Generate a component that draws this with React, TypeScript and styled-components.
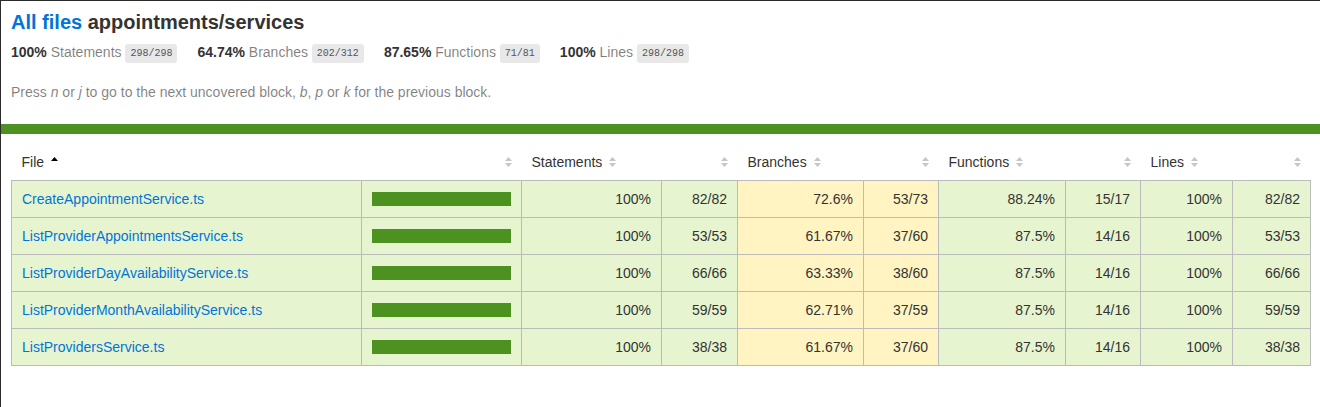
import React from 'react';
import styled, { createGlobalStyle } from 'styled-components';

type Level = 'high' | 'medium';

const GlobalStyle = createGlobalStyle`
  *, *::before, *::after { box-sizing: border-box; }
  html, body { margin: 0; padding: 0; }
  body {
    font-family: "Liberation Sans", Arial, Helvetica, sans-serif;
    font-size: 14px;
    color: #333;
    background: #fff;
    border-top: 1px solid #2b2b2b;
    border-left: 1px solid #2b2b2b;
    min-height: 100vh;
  }
`;

const Pad = styled.div`
  padding: 10px;
`;

const Title = styled.h1`
  font-size: 20px;
  font-weight: bold;
  margin: 0;
`;

const TitleLink = styled.a`
  color: #0074d9;
  text-decoration: none;
`;

const Summary = styled.div`
  display: flex;
`;

const Metric = styled.div`
  padding: 10px 20px 10px 0;
`;

const Strong = styled.span`
  font-weight: bold;
`;

const Quiet = styled.span`
  color: rgba(0, 0, 0, 0.5);
`;

const Fraction = styled.span`
  font-family: "Liberation Mono", "DejaVu Sans Mono", monospace;
  font-size: 10px;
  color: #555;
  background: #e8e8e8;
  padding: 4px 5px;
  border-radius: 3px;
  vertical-align: middle;
`;

const Hint = styled.p`
  color: rgba(0, 0, 0, 0.5);
  margin: 14px 0;
`;

const StatusLine = styled.div`
  height: 10px;
  background: rgb(77, 146, 33);
`;

const Table = styled.table`
  border-collapse: collapse;
  width: 100%;
  table-layout: fixed;
`;

const Body = styled.tbody`
  border: 1px solid #bbb;
`;

const Row = styled.tr`
  border-bottom: 1px solid #bbb;
`;

const Th = styled.th<{ $right?: boolean }>`
  padding: 10px;
  font-weight: normal;
  white-space: nowrap;
  text-align: ${(p) => (p.$right ? 'right' : 'left')};
`;

const Td = styled.td<{ $level: Level; $right?: boolean }>`
  padding: 10px;
  border-right: 1px solid #bbb;
  white-space: nowrap;
  text-align: ${(p) => (p.$right ? 'right' : 'left')};
  background: ${(p) => (p.$level === 'high' ? 'rgb(230, 245, 208)' : '#fff4c2')};
  &:last-child { border-right: none; }
`;

const FileLink = styled.a`
  color: #0074d9;
  text-decoration: none;
`;

const Chart = styled.div`
  line-height: 0;
  border: 1px solid rgb(77, 146, 33);
`;

const CoverFill = styled.div`
  display: inline-block;
  height: 12px;
  background: rgb(77, 146, 33);
`;

const SorterBox = styled.span`
  display: inline-block;
  width: 7px;
  height: 10px;
  margin-left: 0.5em;
  line-height: 0;
  svg { display: block; }
`;

const Sorter: React.FC<{ sorted?: boolean }> = ({ sorted }) => (
  <SorterBox>
    <svg width="7" height="10" viewBox="0 0 7 10">
      {sorted ? (
        <polygon points="0,4 3.5,0 7,4" fill="#000" />
      ) : (
        <>
          <polygon points="0,4 3.5,0 7,4" fill="#c6c6c6" />
          <polygon points="0,6 3.5,10 7,6" fill="#c6c6c6" />
        </>
      )}
    </svg>
  </SorterBox>
);

const metrics = [
  { pct: '100%', label: 'Statements', frac: '298/298' },
  { pct: '64.74%', label: 'Branches', frac: '202/312' },
  { pct: '87.65%', label: 'Functions', frac: '71/81' },
  { pct: '100%', label: 'Lines', frac: '298/298' },
];

type Pair = [string, string, Level];
interface FileRow {
  file: string;
  s: Pair;
  b: Pair;
  f: Pair;
  l: Pair;
}

const rows: FileRow[] = [
  { file: 'CreateAppointmentService.ts', s: ['100%', '82/82', 'high'], b: ['72.6%', '53/73', 'medium'], f: ['88.24%', '15/17', 'high'], l: ['100%', '82/82', 'high'] },
  { file: 'ListProviderAppointmentsService.ts', s: ['100%', '53/53', 'high'], b: ['61.67%', '37/60', 'medium'], f: ['87.5%', '14/16', 'high'], l: ['100%', '53/53', 'high'] },
  { file: 'ListProviderDayAvailabilityService.ts', s: ['100%', '66/66', 'high'], b: ['63.33%', '38/60', 'medium'], f: ['87.5%', '14/16', 'high'], l: ['100%', '66/66', 'high'] },
  { file: 'ListProviderMonthAvailabilityService.ts', s: ['100%', '59/59', 'high'], b: ['62.71%', '37/59', 'medium'], f: ['87.5%', '14/16', 'high'], l: ['100%', '59/59', 'high'] },
  { file: 'ListProvidersService.ts', s: ['100%', '38/38', 'high'], b: ['61.67%', '37/60', 'medium'], f: ['87.5%', '14/16', 'high'], l: ['100%', '38/38', 'high'] },
];

const colWidths = [350, 160, 140, 76, 126, 75, 127, 75, 92, 78];

export default function App() {
  return (
    <>
      <GlobalStyle />
      <Pad>
        <Title>
          <TitleLink href="#">All files</TitleLink> appointments/services
        </Title>
        <Summary>
          {metrics.map((m) => (
            <Metric key={m.label}>
              <Strong>{m.pct} </Strong> <Quiet>{m.label}</Quiet> <Fraction>{m.frac}</Fraction>
            </Metric>
          ))}
        </Summary>
        <Hint>
          Press <em>n</em> or <em>j</em> to go to the next uncovered block, <em>b</em>, <em>p</em> or <em>k</em> for the previous block.
        </Hint>
      </Pad>
      <StatusLine />
      <Pad>
        <Table>
          <colgroup>
            {colWidths.map((w, i) => (
              <col key={i} style={{ width: w }} />
            ))}
          </colgroup>
          <thead>
            <tr>
              <Th>File<Sorter sorted /></Th>
              <Th $right><Sorter /></Th>
              <Th>Statements<Sorter /></Th>
              <Th $right><Sorter /></Th>
              <Th>Branches<Sorter /></Th>
              <Th $right><Sorter /></Th>
              <Th>Functions<Sorter /></Th>
              <Th $right><Sorter /></Th>
              <Th>Lines<Sorter /></Th>
              <Th $right><Sorter /></Th>
            </tr>
          </thead>
          <Body>
            {rows.map((r) => (
              <Row key={r.file}>
                <Td $level="high"><FileLink href="#">{r.file}</FileLink></Td>
                <Td $level="high">
                  <Chart>
                    <CoverFill style={{ width: '100%' }} />
                  </Chart>
                </Td>
                {[r.s, r.b, r.f, r.l].map((p, i) => (
                  <React.Fragment key={i}>
                    <Td $level={p[2]} $right>{p[0]}</Td>
                    <Td $level={p[2]} $right>{p[1]}</Td>
                  </React.Fragment>
                ))}
              </Row>
            ))}
          </Body>
        </Table>
      </Pad>
    </>
  );
}
